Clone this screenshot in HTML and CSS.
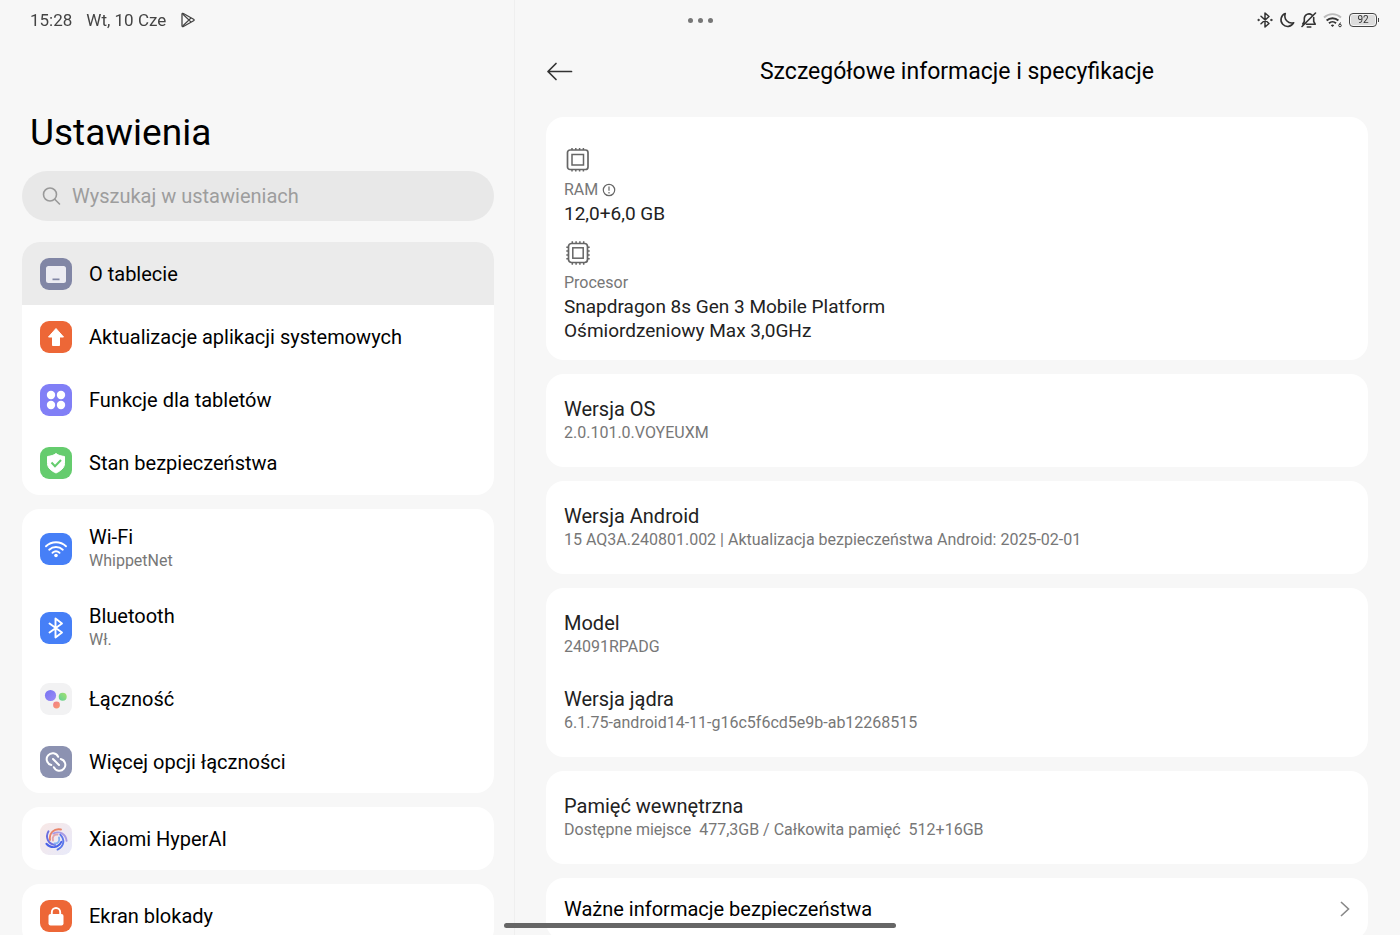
FILE: index.html
```html
<!DOCTYPE html>
<html lang="pl">
<head>
  <meta charset="UTF-8" />
  <meta name="viewport" content="width=device-width, initial-scale=1" />
  <title>Ustawienia</title>
  <link rel="stylesheet" href="styles.css">
</head>
<body>
  <div class="status-bar">
    <div class="status-left">
      <span>15:28</span>
      <span>Wt, 10 Cze</span>
      <svg width="16" height="16" viewBox="0 0 16 16" fill="none" stroke="#444" stroke-width="1.3" stroke-linejoin="round">
        <path d="M2 2.2v11.6c0 .8.7 1.1 1.4.7l10.2-5.7c.7-.4.7-1.2 0-1.6L3.4 1.5C2.7 1.1 2 1.4 2 2.2z" />
        <path d="M2.5 1.8l8.6 8.3M2.5 14.2l8.6-8.3" />
      </svg>
    </div>
    <div class="window-dots"><i></i><i></i><i></i></div>
    <div class="status-right">
      <svg width="16" height="18" viewBox="0 0 16 18" fill="none" stroke="#333" stroke-width="1.5" stroke-linejoin="round" stroke-linecap="round">
        <path d="M4 5.3l8 7.2-4 3.5V2l4 3.5-8 7.2" />
        <circle cx="1.5" cy="9" r=".7" fill="#333" stroke-width="1" />
        <circle cx="14.3" cy="9" r=".7" fill="#333" stroke-width="1" />
      </svg>
      <svg width="16" height="18" viewBox="0 0 16 18" fill="none" stroke="#333" stroke-width="1.6" stroke-linejoin="round">
        <path d="M6.3 2.5a6.7 6.7 0 1 0 8.4 9.2A7 7 0 0 1 6.3 2.5z" />
      </svg>
      <svg width="16" height="18" viewBox="0 0 16 18" fill="none" stroke="#333" stroke-width="1.6" stroke-linecap="round" stroke-linejoin="round">
        <path d="M3.3 10.5V7.5a4.7 4.7 0 0 1 7.5-3.7M12.7 6.5v4l1.5 2.7H5.5M1 15.5L14.5 2M3.3 10.5l-1.5 2.5M6.3 16h3.5" />
      </svg>
      <svg width="20" height="18" viewBox="0 0 20 18" fill="none" stroke-width="1.9">
        <path d="M1 6.5a12.5 12.5 0 0 1 17 0" stroke="#bbb" />
        <path d="M3.6 9.5a8.7 8.7 0 0 1 11.8 0" stroke="#333" />
        <path d="M6 12.3a5 5 0 0 1 7 0" stroke="#333" />
        <path d="M7.8 14.2a2.6 2.6 0 0 1 3.4 0L9.5 16z" fill="#333" />
        <path d="M17.5 11.5l-1.3 2.3" stroke="#333" stroke-width="1" />
        <circle cx="17" cy="14.5" r="1.3" stroke="#333" stroke-width="1" />
      </svg>
      <span class="battery"><span>92</span></span>
    </div>
  </div>

  <div class="layout">
    <nav class="sidebar">
      <h1>Ustawienia</h1>
      <label class="search">
        <svg width="20" height="20" viewBox="0 0 20 20" fill="none" stroke="#999" stroke-width="1.6" stroke-linecap="round">
          <circle cx="8" cy="8.5" r="6.5" />
          <path d="M13 13.5l4.500 4.5" />
        </svg>
        <input type="text" placeholder="Wyszukaj w ustawieniach" aria-label="Wyszukaj w ustawieniach" />
      </label>

      <div class="menu menu-main">
        <a class="menu-item active" href="#">
          <svg class="icon" viewBox="0 0 32 32">
            <rect width="32" height="32" rx="9" fill="#8186a5" />
            <rect x="6" y="8" width="20" height="17" rx="2.5" fill="#ececf2" />
            <rect x="12.5" y="20.5" width="7" height="1.7" fill="#8186a5" />
          </svg>
          <span class="name">O tablecie</span>
        </a>
        <a class="menu-item" href="#">
          <svg class="icon" viewBox="0 0 32 32">
            <rect width="32" height="32" rx="9" fill="#ed6737" />
            <path d="M16 7.5l7.5 8.5h-4v8.5h-7V16h-4z" fill="#fff" stroke="#fff" stroke-width="1" stroke-linejoin="round" />
          </svg>
          <span class="name">Aktualizacje aplikacji systemowych</span>
        </a>
        <a class="menu-item" href="#">
          <svg class="icon" viewBox="0 0 32 32">
            <rect width="32" height="32" rx="9" fill="#817ff6" />
            <g fill="#fff">
              <circle cx="11" cy="11" r="4.2" />
              <circle cx="21" cy="11" r="4.2" />
              <circle cx="11" cy="21" r="4.2" />
              <circle cx="21" cy="21" r="4.2" />
            </g>
          </svg>
          <span class="name">Funkcje dla tabletów</span>
        </a>
        <a class="menu-item" href="#">
          <svg class="icon" viewBox="0 0 32 32">
            <rect width="32" height="32" rx="9" fill="#65cc6e" />
            <path d="M16 6.5c2.5 2 5 2.5 8.500 3v7c0 4.500-4 7.500-8.500 9.500-4.500-2-8.500-5-8.500-9.500v-7c3.500-.5 6-1 8.500-3z" fill="#fff" stroke="#fff" stroke-width="1" stroke-linejoin="round" />
            <path d="M11.5 15.5l3.5 3.8 6-6.3" fill="none" stroke="#65cc6e" stroke-width="2" />
          </svg>
          <span class="name">Stan bezpieczeństwa</span>
        </a>
      </div>

      <div class="menu">
        <a class="menu-item tall" href="#">
          <svg class="icon" viewBox="0 0 32 32">
            <rect width="32" height="32" rx="9" fill="#467ff7" />
            <g fill="none" stroke="#fff" stroke-width="1.9" stroke-linecap="round">
              <path d="M6 13.3a14.5 14.5 0 0 1 20 0" />
              <path d="M9.2 16.7a10 10 0 0 1 13.6 0" />
              <path d="M12.5 19.8a5.4 5.4 0 0 1 7 0" />
            </g>
            <circle cx="16" cy="22.5" r="1.8" fill="#fff" />
          </svg>
          <span class="labels">
            <span class="name">Wi-Fi</span>
            <span class="sub">WhippetNet</span>
          </span>
        </a>
        <a class="menu-item tall" href="#">
          <svg class="icon" viewBox="0 0 32 32">
            <rect width="32" height="32" rx="9" fill="#467ff7" />
            <path d="M9.5 11.5l12.5 9-6.5 5V6.5l6.500 5-12.5 9" fill="none" stroke="#fff" stroke-width="1.9" stroke-linecap="round" stroke-linejoin="round" />
          </svg>
          <span class="labels">
            <span class="name">Bluetooth</span>
            <span class="sub">Wł.</span>
          </span>
        </a>
        <a class="menu-item" href="#">
          <svg class="icon" viewBox="0 0 32 32">
            <defs>
              <linearGradient id="violet" x1="0" y1="0" x2="1" y2="1">
                <stop offset="0" stop-color="#7672f2" />
                <stop offset="1" stop-color="#9b8cf5" />
              </linearGradient>
              <linearGradient id="green" x1="0" y1="1" x2="1" y2="0">
                <stop offset="0" stop-color="#62cf98" />
                <stop offset="1" stop-color="#a5e26e" />
              </linearGradient>
              <linearGradient id="coral" x1="0" y1="0" x2="1" y2="1">
                <stop offset="0" stop-color="#f27d8c" />
                <stop offset="1" stop-color="#f79a6c" />
              </linearGradient>
            </defs>
            <rect width="32" height="32" rx="9" fill="#f2f2f3" />
            <circle cx="10.5" cy="12.5" r="5.6" fill="url(#violet)" />
            <circle cx="22.7" cy="13.7" r="4" fill="url(#green)" />
            <circle cx="16.5" cy="22" r="3.4" fill="url(#coral)" />
          </svg>
          <span class="name">Łączność</span>
        </a>
        <a class="menu-item" href="#">
          <svg class="icon" viewBox="0 0 32 32">
            <rect width="32" height="32" rx="9" fill="#8c92b1" />
            <g fill="none" stroke="#fff" stroke-width="2" stroke-linecap="round">
              <path d="M11.3 19A6 6 0 1 1 18.2 10.8" />
              <path d="M20.7 13A6 6 0 1 1 13.8 21.2" />
              <path d="M13 13l6 6" />
            </g>
          </svg>
          <span class="name">Więcej opcji łączności</span>
        </a>
      </div>

      <div class="menu">
        <a class="menu-item" href="#">
          <svg class="icon" viewBox="0 0 32 32">
            <defs>
              <linearGradient id="aiBg" x1="0" y1="0" x2="1" y2="1">
                <stop offset="0" stop-color="#f8e8e6" />
                <stop offset="1" stop-color="#e8eafa" />
              </linearGradient>
            </defs>
            <rect width="32" height="32" rx="9" fill="url(#aiBg)" />
            <g fill="none" stroke-width="1.9" stroke-linecap="round">
              <path d="M10 17C9 10 14 5 21 6.5" stroke="#e98368" />
              <path d="M10 17C9 10 14 5 21 6.5" transform="rotate(72 16 16)" stroke="#a99be4" />
              <path d="M10 17C9 10 14 5 21 6.5" transform="rotate(144 16 16)" stroke="#5b78ea" />
              <path d="M10 17C9 10 14 5 21 6.5" transform="rotate(216 16 16)" stroke="#4a63e8" />
              <path d="M10 17C9 10 14 5 21 6.5" transform="rotate(288 16 16)" stroke="#6b6ee0" />
              <path d="M13 17.5C12 14 14 11 17.500 11.500" stroke="#e2a5ae" />
              <path d="M13 17.5C12 14 14 11 17.500 11.500" transform="rotate(180 16 16)" stroke="#86b1f4" />
            </g>
          </svg>
          <span class="name">Xiaomi HyperAI</span>
        </a>
      </div>

      <div class="menu">
        <a class="menu-item" href="#">
          <svg class="icon" viewBox="0 0 32 32">
            <rect width="32" height="32" rx="9" fill="#ed6737" />
            <rect x="8.5" y="14" width="15" height="11.5" rx="2" fill="#fff" />
            <path d="M11.8 15v-2.8a4.2 4.2 0 0 1 8.4 0V15" fill="none" stroke="#fff" stroke-width="1.9" />
          </svg>
          <span class="name">Ekran blokady</span>
        </a>
      </div>
    </nav>

    <main class="details">
      <header class="details-header">
        <button class="back-btn" aria-label="Wstecz">
          <svg width="28" height="20" viewBox="0 0 28 20" fill="none" stroke="#333" stroke-width="1.7" stroke-linecap="round" stroke-linejoin="round">
            <path d="M25.5 9.5H2M10 1.5l-8 8 8 8" />
          </svg>
        </button>
        <h2>Szczegółowe informacje i specyfikacje</h2>
      </header>

      <section class="card hardware">
        <div class="spec">
          <svg width="28" height="28" viewBox="0 0 28 28" fill="none" stroke="#666" stroke-width="1.7">
            <rect x="3.5" y="4" width="20.5" height="19.5" rx="2.5" />
            <rect x="8" y="8.5" width="11.5" height="10.5" stroke-width="1.5" />
            <path d="M8 2v2M11.8 2v2M15.6 2v2M19.4 2v2M8 23.5v2M11.8 23.5v2M15.6 23.5v2M19.4 23.5v2" stroke-width="1.5" />
          </svg>
          <p class="spec-name">RAM
            <svg width="14" height="14" viewBox="0 0 14 14" fill="none" stroke="#666" stroke-width="1.2">
              <circle cx="7" cy="7" r="5.7" />
              <path d="M7 3.5v4.3M7 9v1.4" />
            </svg>
          </p>
          <p class="spec-value">12,0+6,0 GB</p>
        </div>
        <div class="spec">
          <svg width="28" height="28" viewBox="0 0 28 28" fill="none" stroke="#666" stroke-width="1.7">
            <rect x="4.5" y="4.5" width="19" height="19" rx="3" />
            <rect x="8.8" y="8.8" width="10.4" height="10.4" stroke-width="1.5" />
            <path d="M8.3 2.3v2M12.1 2.3v2M15.9 2.3v2M19.7 2.3v2M8.3 23.7v2M12.1 23.7v2M15.9 23.7v2M19.7 23.7v2M2.3 8.3h2M2.3 12.1h2M2.3 15.9h2M2.3 19.7h2M23.7 8.3h2M23.7 12.1h2M23.7 15.9h2M23.7 19.7h2" stroke-width="1.5" />
          </svg>
          <p class="spec-name">Procesor</p>
          <p class="spec-value">Snapdragon 8s Gen 3 Mobile Platform<br>Ośmiordzeniowy Max 3,0GHz</p>
        </div>
      </section>

      <section class="card">
        <div class="entry">
          <h3>Wersja OS</h3>
          <p>2.0.101.0.VOYEUXM</p>
        </div>
      </section>

      <section class="card">
        <div class="entry">
          <h3>Wersja Android</h3>
          <p>15 AQ3A.240801.002 | Aktualizacja bezpieczeństwa Android: 2025-02-01</p>
        </div>
      </section>

      <section class="card">
        <div class="entry">
          <h3>Model</h3>
          <p>24091RPADG</p>
        </div>
        <div class="entry">
          <h3>Wersja jądra</h3>
          <p>6.1.75-android14-11-g16c5f6cd5e9b-ab12268515</p>
        </div>
      </section>

      <section class="card">
        <div class="entry">
          <h3>Pamięć wewnętrzna</h3>
          <p>Dostępne miejsce&nbsp; 477,3GB / Całkowita pamięć&nbsp; 512+16GB</p>
        </div>
      </section>

      <a class="card link-card" href="#">
        <span>Ważne informacje bezpieczeństwa</span>
        <svg width="10" height="16" viewBox="0 0 10 16" fill="none" stroke="#888" stroke-width="1.6">
          <path d="M1 1l7.5 7L1 15" />
        </svg>
      </a>
    </main>
  </div>

  <div class="home-bar"></div>
</body>
</html>
```

FILE: styles.css
```css
* {
  box-sizing: border-box;
}
body {
  margin: 0;
  height: 100vh;
  overflow: hidden;
  background-color: #f7f7f7;
  color: #000;
  font-family: Roboto, "Noto Sans", sans-serif;
  font-size: 20px;
  line-height: 24px;
}
h1, h2, h3, p {
  margin: 0;
  font-weight: 400;
}
a {
  color: inherit;
  text-decoration: none;
}
svg {
  display: block;
  flex-shrink: 0;
}

/* ==== STATUS BAR ==== */
.status-bar {
  position: fixed;
  top: 0;
  left: 0;
  right: 0;
  z-index: 10;
  height: 40px;
  padding: 0 20px;
  display: grid;
  grid-template-columns: 1fr auto 1fr;
  align-items: center;
  color: #444;
  font-size: 17px;
}
.status-left {
  display: flex;
  align-items: center;
  gap: 14px;
  padding-left: 10px;
}
.window-dots {
  display: flex;
  gap: 5px;
}
.window-dots i {
  width: 5px;
  height: 5px;
  border-radius: 50%;
  background-color: #777;
}
.status-right {
  display: flex;
  align-items: center;
  justify-content: flex-end;
  gap: 6px;
}
.battery {
  position: relative;
  width: 28px;
  height: 14px;
  margin-right: 3px;
  padding: 1px;
  border: 1px solid #444;
  border-radius: 4px;
}
.battery span {
  display: block;
  border-radius: 2px;
  background-color: #ddd;
  color: #333;
  font-size: 10px;
  line-height: 10px;
  text-align: center;
}
.battery::after {
  content: "";
  position: absolute;
  top: 4px;
  right: -3px;
  width: 1px;
  height: 4px;
  background-color: #444;
}

/* ==== LAYOUT ==== */
.layout {
  display: grid;
  grid-template-columns: 515fr 885fr;
  height: 100%;
}
.sidebar, .details {
  min-width: 0;
  overflow-y: auto;
  scrollbar-width: none;
}

/* ==== SIDEBAR ==== */
.sidebar {
  padding: 109px 20px 0 22px;
  border-right: 1px solid #efefef;
}
.sidebar h1 {
  padding-left: 8px;
  font-size: 37px;
  line-height: 48px;
}
.search {
  display: flex;
  align-items: center;
  gap: 10px;
  height: 50px;
  margin: 14px 0 21px;
  padding: 0 20px;
  border-radius: 25px;
  background-color: #e8e8e8;
}
.search input {
  flex: 1;
  min-width: 0;
  padding: 0;
  border: none;
  outline: none;
  background: none;
  font: inherit;
}
.search input::placeholder {
  color: #9d9d9d;
}
.menu {
  display: flex;
  flex-direction: column;
  margin-bottom: 14px;
  border-radius: 18px;
  background-color: #fff;
  overflow: hidden;
}
.menu-main {
  min-height: 253px;
}
.menu-item {
  display: flex;
  flex: 1 0 auto;
  align-items: center;
  gap: 17px;
  min-height: 63px;
  padding: 0 18px;
}
.menu-item.tall {
  min-height: 79px;
}
.menu-item.active {
  background-color: #ebebeb;
}
.icon {
  width: 32px;
  height: 32px;
}
.labels {
  display: flex;
  flex-direction: column;
}
.sub {
  color: #777;
  font-size: 16px;
}

/* ==== DETAILS ==== */
.details {
  display: flex;
  flex-direction: column;
  gap: 14px;
  padding: 40px 32px 0 31px;
}
.details > * {
  flex-shrink: 0;
}
.details-header {
  display: grid;
  grid-template-columns: 28px 1fr 28px;
  align-items: center;
  height: 63px;
}
.details-header h2 {
  font-size: 23px;
  line-height: 30px;
  text-align: center;
}
.back-btn {
  padding: 0;
  border: none;
  background: none;
  cursor: pointer;
}
.card {
  display: flex;
  flex-direction: column;
  gap: 28px;
  padding: 23px 18px 22px;
  border-radius: 18px;
  background-color: #fff;
}
.hardware {
  gap: 13px;
  padding: 29px 18px 17px;
}
.spec-name {
  display: flex;
  align-items: center;
  gap: 4px;
  margin-top: 4px;
  color: #777;
  font-size: 16px;
}
.spec-value {
  color: #222;
  font-size: 19px;
}
.entry h3 {
  color: #222;
  font-size: 20px;
}
.entry p {
  color: #777;
  font-size: 16px;
}
.link-card {
  flex-direction: row;
  align-items: center;
  justify-content: space-between;
  padding: 19px 18px;
}

/* ==== GESTURE BAR ==== */
.home-bar {
  position: fixed;
  left: 36%;
  right: 36%;
  bottom: 7px;
  z-index: 10;
  height: 5px;
  border-radius: 3px;
  background-color: #666;
}
```
